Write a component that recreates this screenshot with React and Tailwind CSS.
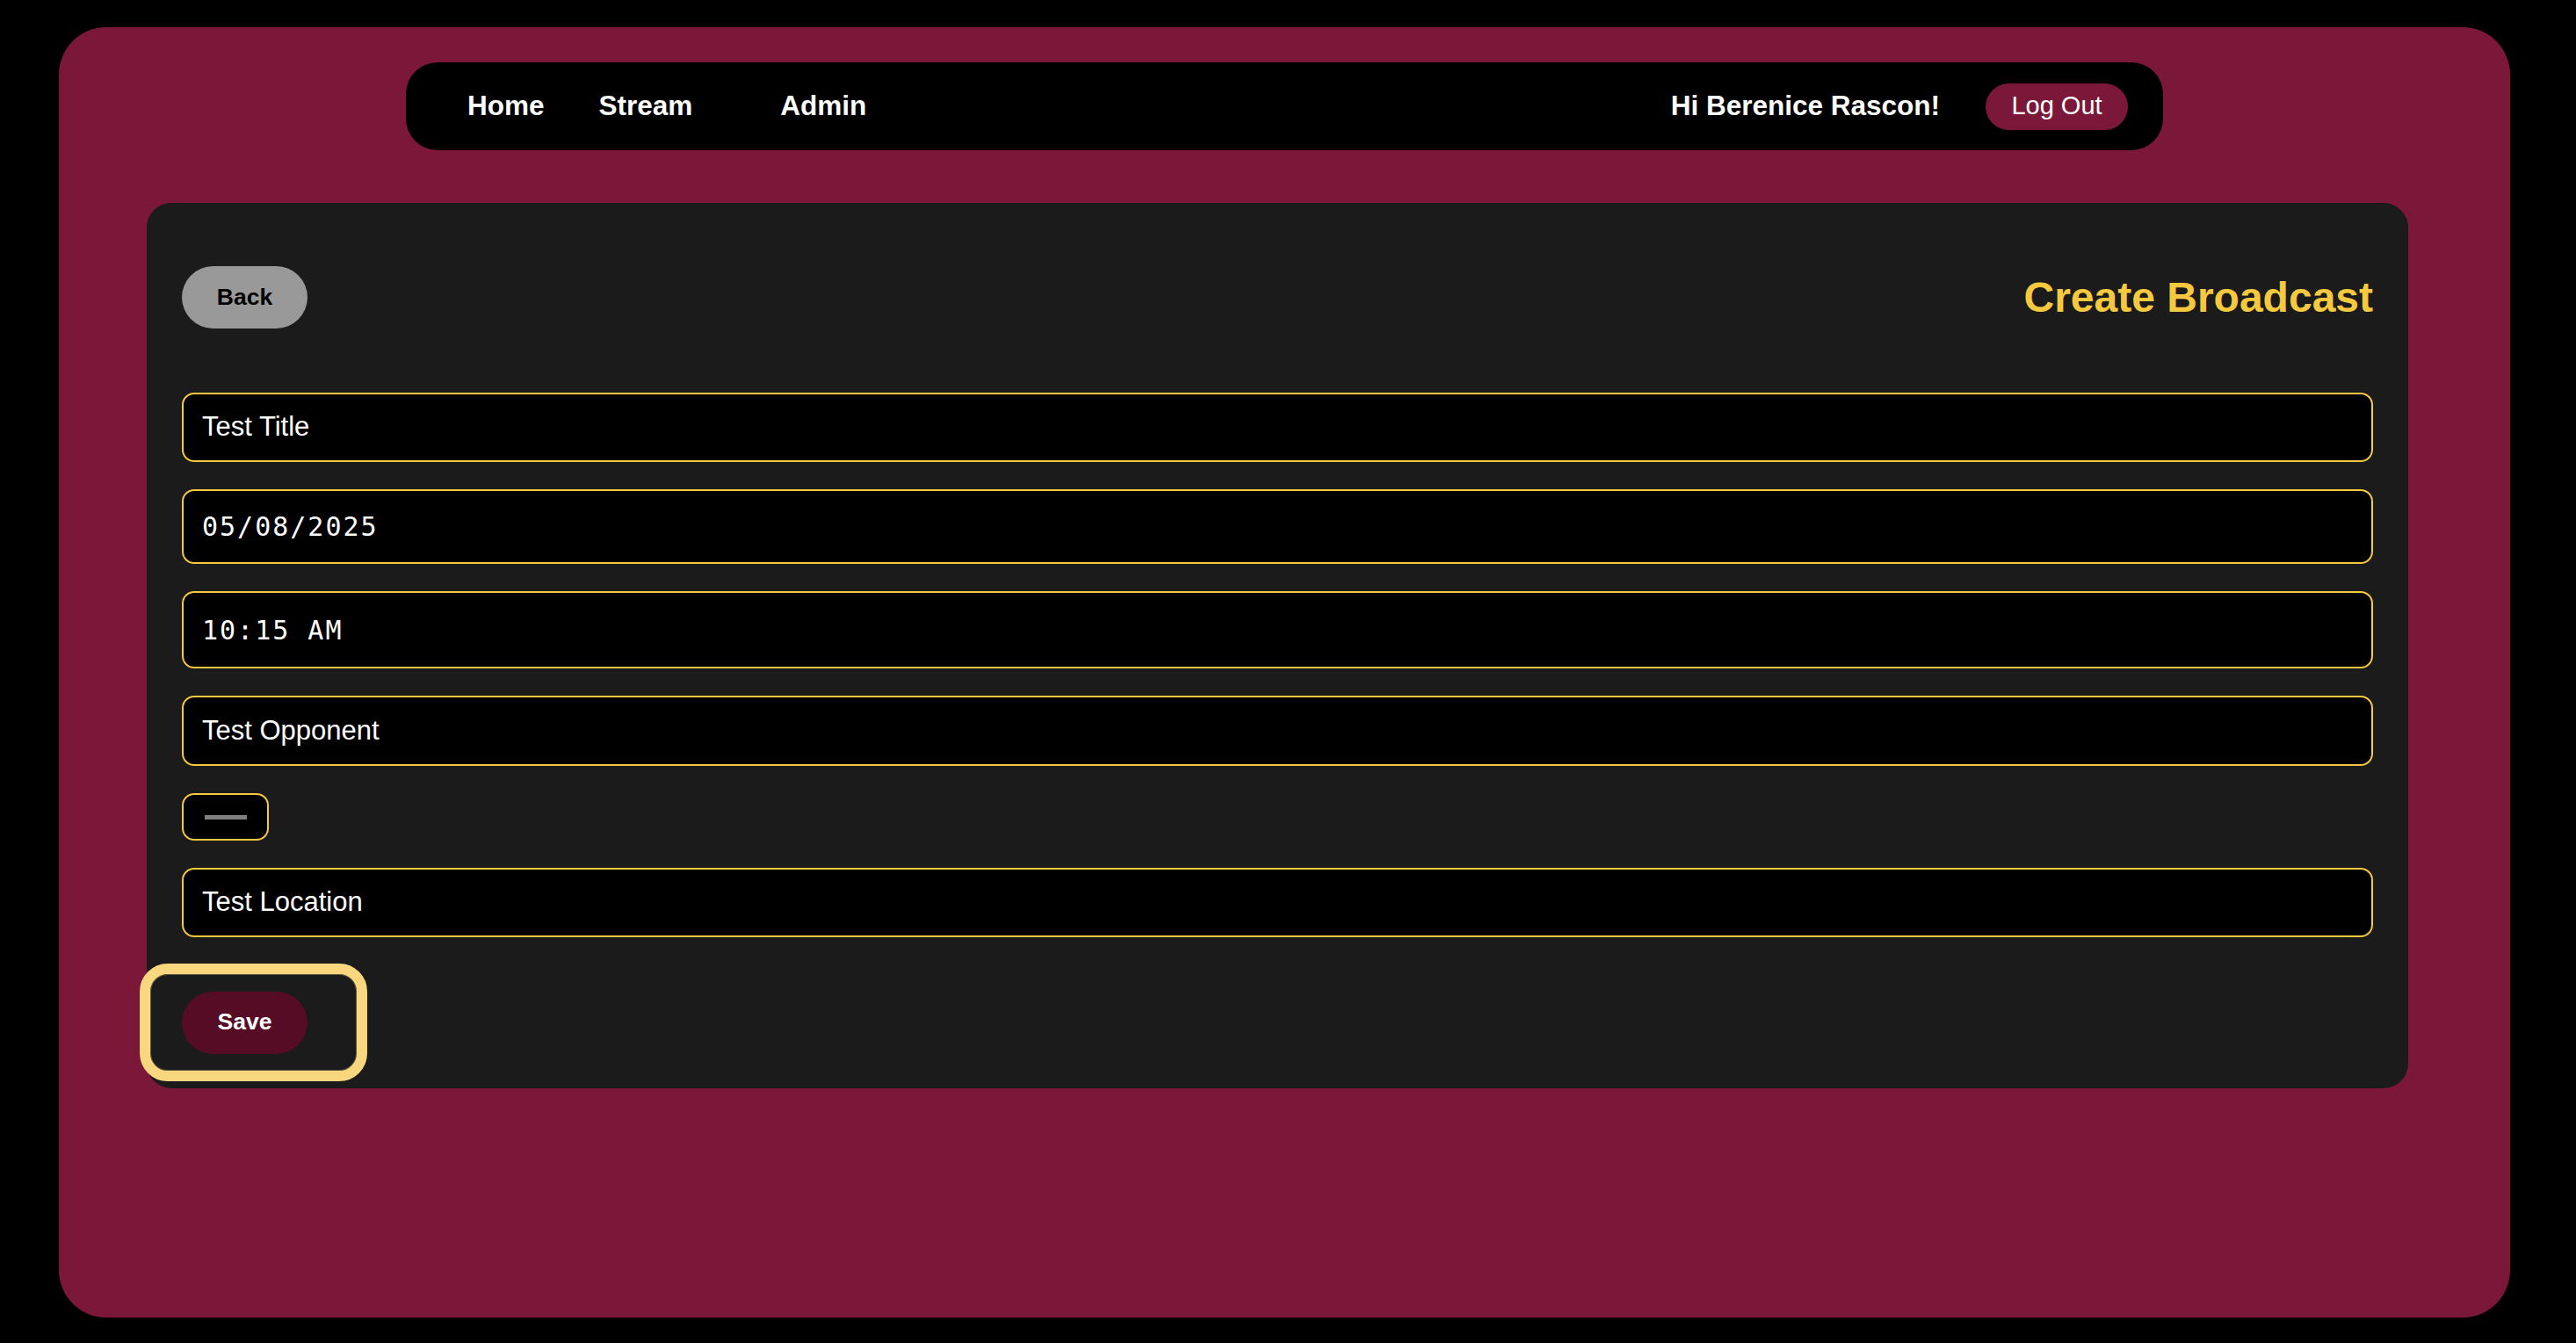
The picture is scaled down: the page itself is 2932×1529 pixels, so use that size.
import React from "react";

const sans = { fontFamily: '"Liberation Sans", Arial, sans-serif' };

function Field({ value, h, mono }) {
  return (
    <div
      className={`w-full ${h} rounded-[14px] border-2 border-[#f4c93f] bg-black flex items-center pl-[21px] text-white ${
        mono ? "text-[30px] tracking-[2px] font-['DejaVu_Sans_Mono',monospace]" : "text-[31px] font-['Liberation_Sans',Arial,sans-serif]"
      }`}
    >
      {value}
    </div>
  );
}

export default function App() {
  return (
    <div className="min-h-screen w-full bg-black pt-[31px] pl-[67px]" style={sans}>
      <div className="w-[2790px] h-[1469px] rounded-[54px] bg-[#7b1839] pt-[40px]">
        {/* Navbar */}
        <nav className="mx-auto w-[2000px] h-[100px] rounded-[36px] bg-black flex items-center pl-[70px] pr-[40px]">
          <span className="text-white font-bold text-[31.5px]">Home</span>
          <span className="text-white font-bold text-[31.5px] ml-[62px]">Stream</span>
          <span className="text-white font-bold text-[31.5px] ml-[100px]">Admin</span>
          <div className="ml-auto flex items-center">
            <span className="text-white font-bold text-[31.5px] mr-[52px]">Hi Berenice Rascon!</span>
            <button className="w-[162px] h-[53px] rounded-full bg-[#7b1839] text-white text-[29px] flex items-center justify-center">
              Log Out
            </button>
          </div>
        </nav>

        {/* Card */}
        <div className="ml-[100px] mt-[60px] w-[2574px] rounded-[28px] bg-[#1b1b1b] pt-[72px] px-[40px] pb-[20px]">
          <div className="flex items-center justify-between h-[71px]">
            <button className="w-[143px] h-[71px] rounded-full bg-[#999999] text-black font-bold text-[26.5px] flex items-center justify-center">
              Back
            </button>
            <h1 className="text-[#f4c93f] font-bold text-[48px] leading-none">Create Broadcast</h1>
          </div>

          <div className="mt-[73px] flex flex-col gap-[31px]">
            <Field value="Test Title" h="h-[79px]" />
            <Field value="05/08/2025" h="h-[85px]" mono />
            <Field value="10:15 AM" h="h-[88px]" mono />
            <Field value="Test Opponent" h="h-[80px]" />
            <div className="w-[99px] h-[54px] rounded-[14px] border-2 border-[#f4c93f] bg-black flex items-center pl-[24px]">
              <div className="w-[48px] h-[5px] bg-[#808080]" />
            </div>
            <Field value="Test Location" h="h-[79px]" />
          </div>

          <div className="mt-[42px] -ml-[36px] w-[235px] h-[110px] rounded-[20px] border border-[#5e5843] outline-[12px] outline-solid outline-[#f9d77f] flex items-center pl-[35px]">
            <button className="w-[143px] h-[71px] rounded-full bg-[#560c24] text-white font-bold text-[26.5px] flex items-center justify-center">
              Save
            </button>
          </div>
        </div>
      </div>
    </div>
  );
}
